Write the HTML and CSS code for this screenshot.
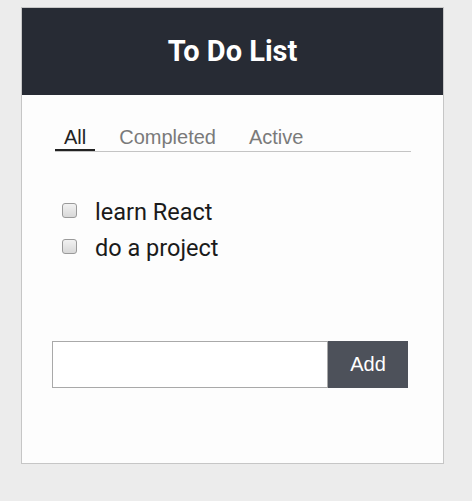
FILE: index.html
```html
<!DOCTYPE html>
<html>
<head>
<meta charset="utf-8">
<link rel="stylesheet" href="styles.css">
</head>
<body>
<div class="card">
  <header class="header"><h1 class="title">To Do List</h1></header>
  <div class="content">
    <nav class="tabs">
      <span class="tab active">All</span>
      <span class="tab">Completed</span>
      <span class="tab">Active</span>
    </nav>
    <ul class="list">
      <li class="item"><input type="checkbox" class="check"><span>learn React</span></li>
      <li class="item"><input type="checkbox" class="check"><span>do a project</span></li>
    </ul>
    <form class="add-form">
      <input type="text" class="add-input">
      <button type="button" class="add-btn">Add</button>
    </form>
  </div>
</div>
</body>
</html>
```
FILE: styles.css
```css
html, body {
  margin: 0;
  padding: 0;
  background: #ececec;
}
body {
  padding: 7px 0 0 21px;
  font-family: Roboto, "Liberation Sans", sans-serif;
}
.card {
  box-sizing: border-box;
  width: 423px;
  height: 457px;
  border: 1px solid #c6c6c6;
  background: #fdfdfd;
}
.header {
  height: 87px;
  background: #272b34;
  display: flex;
  align-items: center;
  justify-content: center;
}
.title {
  margin: 0;
  color: #fff;
  font-family: Roboto, sans-serif;
  font-weight: 700;
  font-size: 29px;
  padding-bottom: 2px;
}
.content {
  padding: 31px 32px 0 30px;
}
.tabs {
  margin-left: 3px;
  display: flex;
  gap: 15px;
  border-bottom: 1px solid #c4c4c4;
  height: 25px;
}
.tab {
  font-family: "Liberation Sans", Arial, sans-serif;
  font-size: 20px;
  color: #7a7a7a;
  padding: 0 9px;
  line-height: 23px;
  height: 24px;
}
.tab.active {
  color: #222;
  border-bottom: 2px solid #222;
  height: 23px;
}
.list {
  list-style: none;
  margin: 42px 0 0 0;
  padding: 0 0 0 10px;
}
.item {
  display: flex;
  align-items: center;
  height: 36px;
  font-size: 23.5px;
  color: #1a1a1a;
}
.check {
  appearance: none;
  -webkit-appearance: none;
  box-sizing: border-box;
  width: 15px;
  height: 15px;
  margin: 0 18px 4px 0;
  border: 1px solid #9a9a9a;
  border-radius: 3px;
  background: linear-gradient(#f2f2f2, #d8d8d8);
}
.add-form {
  display: flex;
  margin-top: 75px;
}
.add-input {
  box-sizing: border-box;
  width: 276px;
  height: 47px;
  margin: 0;
  border: 1px solid #a9a9a9;
  background: #fff;
  outline: none;
}
.add-btn {
  width: 80px;
  height: 47px;
  margin: 0;
  border: none;
  background: #4d515a;
  color: #fff;
  font-family: "Liberation Sans", Arial, sans-serif;
  font-size: 20px;
}
```
